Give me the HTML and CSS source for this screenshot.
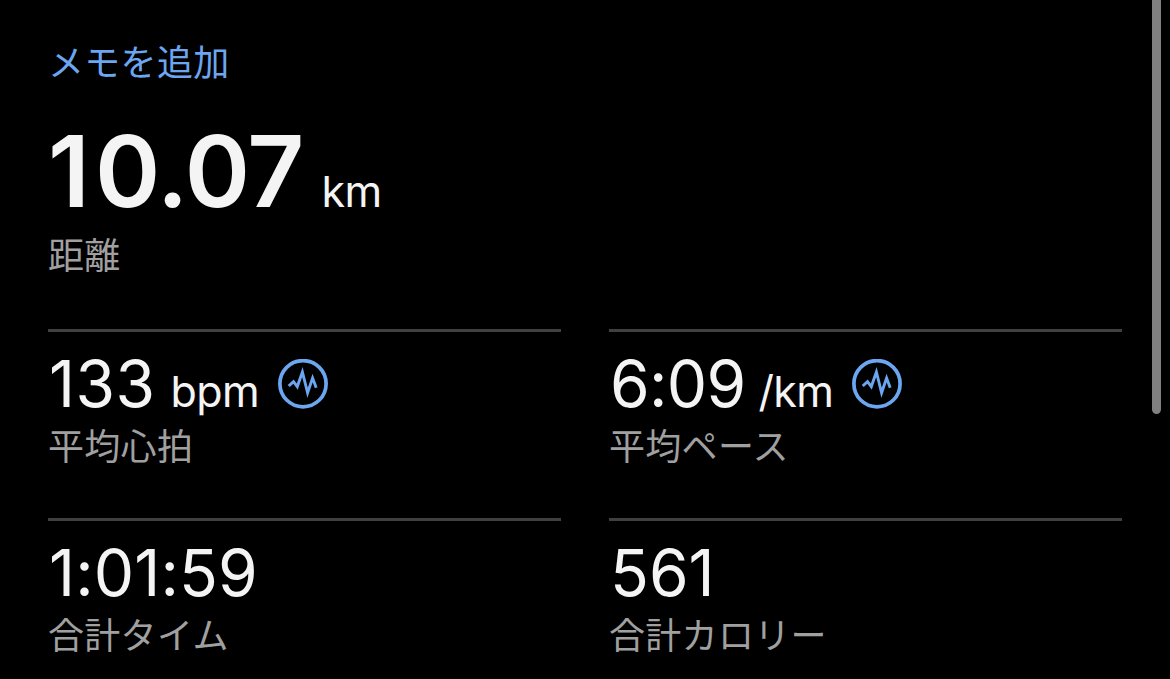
FILE: index.html
```html
<!DOCTYPE html>
<html lang="ja">
<head>
    <meta charset="UTF-8">
    <meta name="viewport" content="width=device-width, initial-scale=1.0">
    <title>ワークアウト</title>
    <link rel="stylesheet" href="styles.css">
</head>
<body>
    <main class="workout">
        <a class="add-note" href="#">メモを追加</a>

        <section class="distance">
            <div class="distance-value">
                <span class="distance-number"><span class="lead-digit">1</span>0.07</span>
                <span class="unit">km</span>
            </div>
            <div class="label">距離</div>
        </section>

        <section class="stats">
            <div class="stat">
                <div class="stat-value">
                    <span class="number number-bpm">133</span>
                    <span class="unit">bpm</span>
                    <svg class="chart-icon" viewBox="0 0 50 50">
                        <circle cx="25" cy="24.7" r="23.1"/>
                        <path d="M10.7 27l4.8-4.4 3.8 5L24.4 13l5.2 20.8L34.6 19l3.6 9.8"/>
                    </svg>
                </div>
                <div class="label">平均心拍</div>
            </div>
            <div class="stat">
                <div class="stat-value">
                    <span class="number number-pace">6:09</span>
                    <span class="unit">/km</span>
                    <svg class="chart-icon" viewBox="0 0 50 50">
                        <circle cx="25" cy="24.7" r="23.1"/>
                        <path d="M10.7 27l4.8-4.4 3.8 5L24.4 13l5.2 20.8L34.6 19l3.6 9.8"/>
                    </svg>
                </div>
                <div class="label">平均ペース</div>
            </div>
            <div class="stat">
                <div class="stat-value">
                    <span class="number number-time">1:01:59</span>
                </div>
                <div class="label">合計タイム</div>
            </div>
            <div class="stat">
                <div class="stat-value">
                    <span class="number">561</span>
                </div>
                <div class="label">合計カロリー</div>
            </div>
        </section>
    </main>

    <div class="scrollbar"></div>
</body>
</html>
```

FILE: styles.css
```css
:root {
    --bg: #000000;
    --text-primary: #f4f4f4;
    --text-secondary: #a0a0a0;
    --accent: #6ca6f0;
    --divider: #404040;
    --scrollbar: #808080;
}

* {
    box-sizing: border-box;
}

body {
    margin: 0;
    height: 679px;
    overflow: hidden;
    background: var(--bg);
    color: var(--text-primary);
    font-family: Inter, "Noto Sans CJK JP", sans-serif;
}

.workout {
    padding: 36px 48px 0;
}

.add-note {
    display: block;
    height: 48px;
    line-height: 48px;
    font-family: "Noto Sans CJK JP", sans-serif;
    font-size: 36px;
    letter-spacing: 0.3px;
    color: var(--accent);
    text-decoration: none;
}

.distance {
    height: 245px;
    padding-top: 37px;
}

.distance-value,
.stat-value {
    display: flex;
    align-items: baseline;
    white-space: nowrap;
}

.distance-value {
    height: 108px;
    line-height: 100px;
}

.distance-number {
    font-size: 99px;
    font-weight: 600;
    letter-spacing: -0.8px;
    margin-right: 18px;
}

.lead-digit {
    letter-spacing: 5px;
}

.unit {
    font-size: 43px;
    line-height: 1;
    letter-spacing: -0.6px;
}

.label {
    height: 48px;
    line-height: 48px;
    font-family: "Noto Sans CJK JP", sans-serif;
    font-size: 36px;
    letter-spacing: 0.3px;
    color: var(--text-secondary);
}

.stats {
    display: grid;
    grid-template-columns: 1fr 1fr;
    grid-auto-rows: 189px;
    column-gap: 48px;
}

.stat {
    border-top: 3px solid var(--divider);
    padding-top: 16px;
}

.stat-value {
    height: 72px;
}

.number {
    font-size: 64px;
    line-height: 72px;
    margin: 0 15px 0 1px;
}

.number-bpm {
    letter-spacing: 0.5px;
}

.number-pace {
    letter-spacing: -0.7px;
    margin-right: 13px;
}

.number-time {
    letter-spacing: 0.15px;
}

.chart-icon {
    width: 50px;
    height: 50px;
    margin: 11px 0 0 19px;
    align-self: flex-start;
    fill: none;
    stroke: var(--accent);
    stroke-width: 2.9;
    stroke-miterlimit: 6;
}

.chart-icon circle {
    stroke-width: 3.7;
}

.scrollbar {
    position: absolute;
    top: -10px;
    right: 9px;
    width: 9px;
    height: 424px;
    border-radius: 5px;
    background: var(--scrollbar);
}
```
